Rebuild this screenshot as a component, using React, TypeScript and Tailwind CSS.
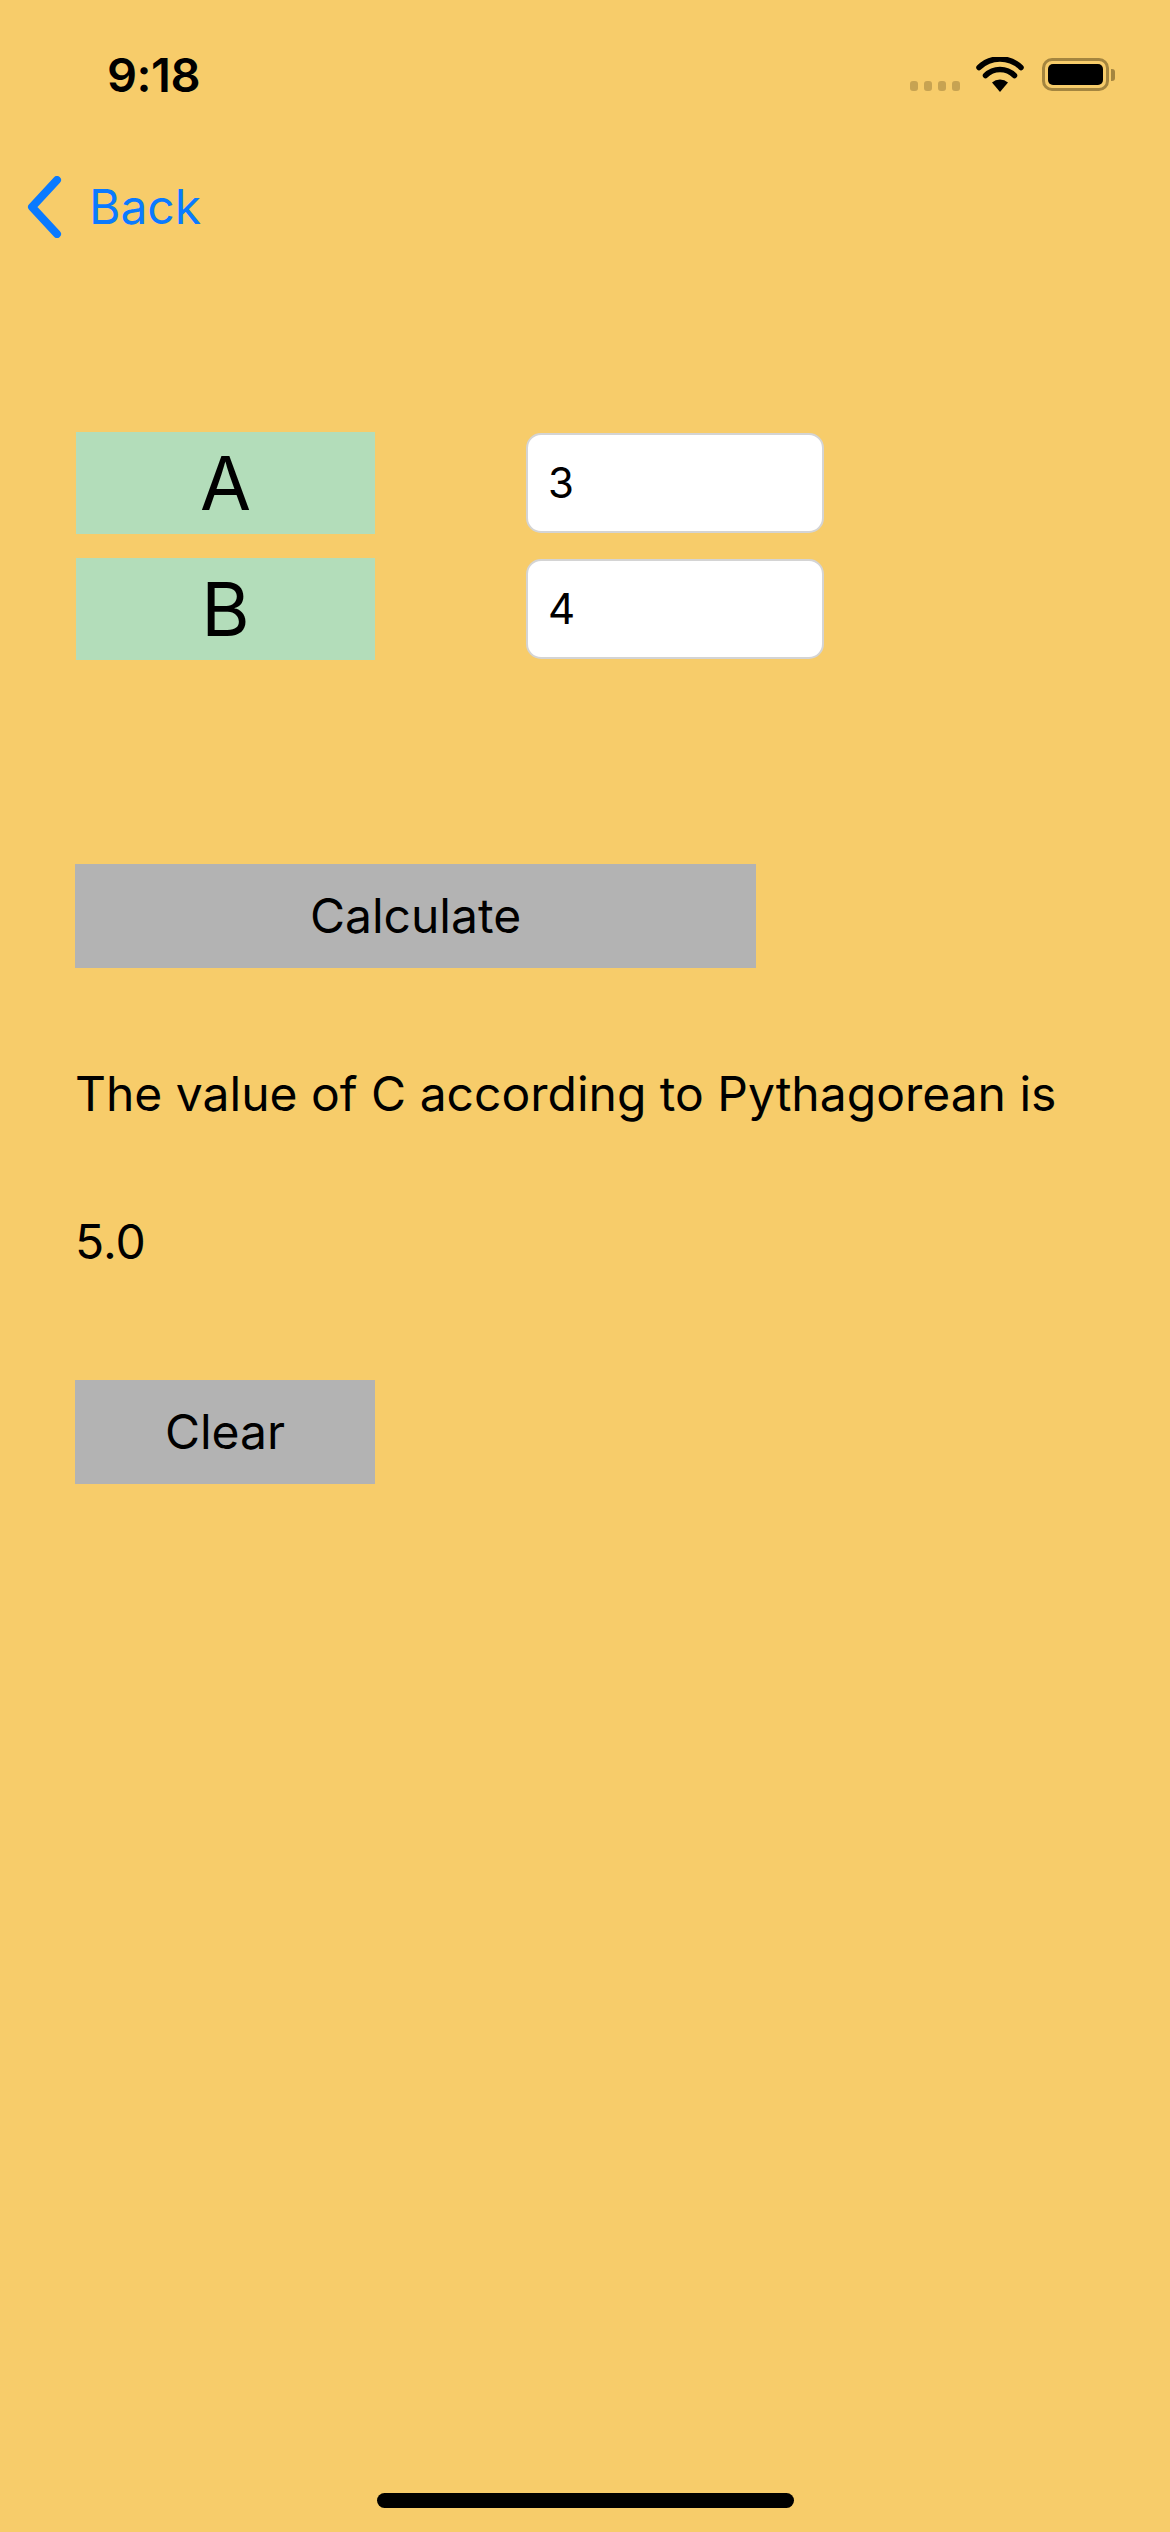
import React from "react";

export default function App() {
  const font = { fontFamily: "Inter, 'Noto Sans', sans-serif" };
  return (
    <div className="w-[1170px] min-h-[2532px] bg-[#F7CC6A] flex flex-col text-black" style={font}>
      {/* Status bar */}
      <div className="h-[149px] flex items-center">
        <div className="pl-[107px] text-[47px] font-semibold leading-none tracking-[-0.5px]">9:18</div>
        <div className="flex-1" />
        <div className="flex items-center pr-[55px]">
          <div className="flex gap-[6px] mt-[23px] mr-[15px]">
            <div className="w-[8px] h-[10px] rounded-[3px] bg-[#C7A352]" />
            <div className="w-[8px] h-[10px] rounded-[3px] bg-[#C7A352]" />
            <div className="w-[8px] h-[10px] rounded-[3px] bg-[#C7A352]" />
            <div className="w-[8px] h-[10px] rounded-[3px] bg-[#C7A352]" />
          </div>
          <svg width="50" height="36" viewBox="0 0 50 36" className="mr-[17px]">
            <path d="M25 35 L17 25.5 A12 12 0 0 1 33 25.5 Z" fill="#000" />
            <path d="M10.5 18.5 A20.5 20.5 0 0 1 39.5 18.5" fill="none" stroke="#000" strokeWidth="5.5" strokeLinecap="round" />
            <path d="M4 10.5 A30 30 0 0 1 46 10.5" fill="none" stroke="#000" strokeWidth="5.5" strokeLinecap="round" />
          </svg>
          <div className="flex items-center">
            <div className="w-[67px] h-[33px] rounded-[10px] border-[3px] border-[#A4853F] p-[3px]">
              <div className="w-full h-full rounded-[5px] bg-black" />
            </div>
            <div className="w-[4px] h-[12px] ml-[2px] rounded-r-[3px] bg-[#A4853F]" />
          </div>
        </div>
      </div>

      {/* Nav bar */}
      <div className="h-[116px] flex items-center">
        <svg width="40" height="62" viewBox="0 0 40 62" className="ml-[24px]">
          <polyline points="33,4 8,31 33,58" fill="none" stroke="#0A7AFF" strokeWidth="8" strokeLinecap="round" strokeLinejoin="round" />
        </svg>
        <span className="ml-[25px] text-[48px] leading-none text-[#0A7AFF]">Back</span>
      </div>

      {/* Rows */}
      <div className="mt-[167px] px-[76px] flex flex-col gap-[24px]">
        <div className="flex items-center h-[102px]">
          <div className="w-[299px] h-[102px] bg-[#B3DDBA] flex items-center justify-center text-[74px] leading-none">A</div>
          <div className="ml-[151px] w-[298px] h-[100px] bg-white rounded-[15px] border-2 border-[#D4D4D4] flex items-center pl-[20px] text-[42px] leading-none">3</div>
        </div>
        <div className="flex items-center h-[102px]">
          <div className="w-[299px] h-[102px] bg-[#B3DDBA] flex items-center justify-center text-[74px] leading-none">B</div>
          <div className="ml-[151px] w-[298px] h-[100px] bg-white rounded-[15px] border-2 border-[#D4D4D4] flex items-center pl-[20px] text-[42px] leading-none">4</div>
        </div>
      </div>

      <div className="px-[75px] flex flex-col items-start">
        <div className="mt-[204px] w-[681px] h-[104px] bg-[#B3B3B3] flex items-center justify-center text-[48px] leading-none">Calculate</div>
        <div className="mt-[97px] h-[58px] text-[48px] leading-[58px] whitespace-nowrap">The value of C according to Pythagorean is</div>
        <div className="mt-[90px] h-[58px] text-[48px] leading-[58px]">5.0</div>
        <div className="mt-[109px] w-[300px] h-[104px] bg-[#B3B3B3] flex items-center justify-center text-[48px] leading-none">Clear</div>
      </div>

      <div className="flex-1" />
      <div className="flex justify-center pb-[24px]">
        <div className="w-[417px] h-[15px] rounded-full bg-black" />
      </div>
    </div>
  );
}
